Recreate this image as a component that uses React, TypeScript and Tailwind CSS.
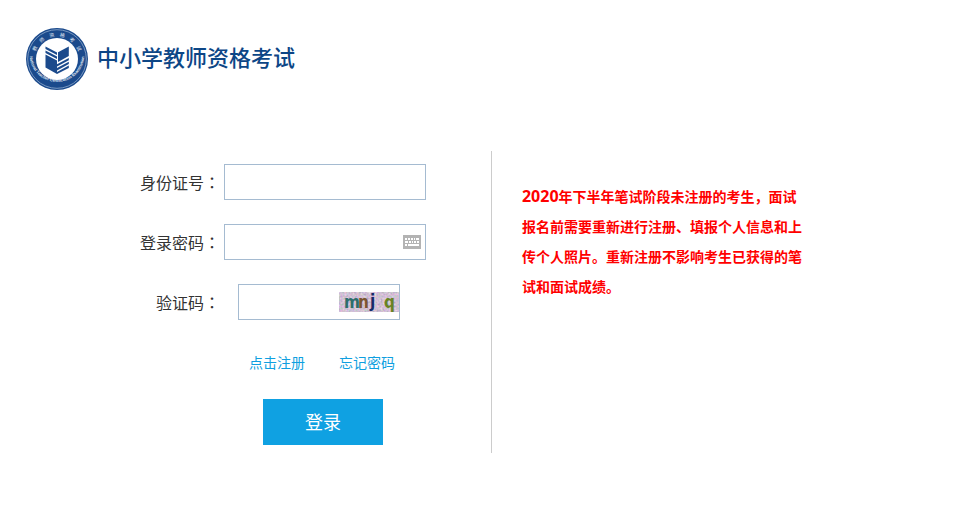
import type { ReactNode } from "react";

const NOTICE =
  "年下半年笔试阶段未注册的考生，面试报名前需要重新进行注册、填报个人信息和上传个人照片。重新注册不影响考生已获得的笔试和面试成绩。";

const inputClass = "h-9 w-full border border-[#a5bbd1] bg-white px-2 text-base text-[#333] outline-none";

function Seal() {
  return (
    <svg className="size-16 shrink-0" viewBox="0 0 64 64" aria-hidden="true">
      <defs>
        <path id="seal-top" d="M9.5 32a22.5 22.5 0 0 1 45 0" />
        <path id="seal-bottom" d="M4.8 30a27.3 27.3 0 0 0 54.4 0" />
      </defs>
      <circle cx="32" cy="32" r="31" fill="#1b4a8c" />
      <circle cx="32" cy="32" r="29.3" fill="none" stroke="#9fb7d6" strokeWidth="0.7" />
      <circle cx="32" cy="32" r="21" fill="#fff" />
      <g fill="#e4ecf6">
        <text fontFamily="'Noto Sans CJK SC', sans-serif" fontSize="5" textAnchor="middle">
          <textPath href="#seal-top" startOffset="50%">教　师　资　格　考　试</textPath>
        </text>
        <text fontFamily="'Liberation Sans', sans-serif" fontSize="4" fontWeight="bold" textAnchor="middle">
          <textPath href="#seal-bottom" startOffset="50%">National Teacher Certification Examination</textPath>
        </text>
      </g>
      {/* Open book: striped and solid faces alternate */}
      <g fill="#1b4a8c">
        <path d="M20.5 19.5L32 25.5V28L20.5 22Z" />
        <path d="M20.5 23.5L32 29.5V32L20.5 26Z" />
        <path d="M20.5 27.5L32 33.5V47L20.5 40.5Z" />
        <path d="M43.8 19.5L33 25.2V35L43.8 29Z" />
        <path d="M43.8 31L32 37.3V39.6L43.8 33.3Z" />
        <path d="M43.8 34.8L32 41.1V43.4L43.8 37.1Z" />
        <path d="M43.8 38.6L32 44.9V47L43.8 40.9Z" />
      </g>
    </svg>
  );
}

function KeyboardIcon() {
  return (
    <svg width="18" height="14" viewBox="0 0 18 14" shapeRendering="crispEdges" aria-hidden="true">
      <path d="M0 0H18V14H0Z" fill="#b3b3b3" />
      <path
        d="M2 3h2v2H2zM5 3h2v2H5zM8 3h2v2H8zM11 3h1v2h-1zM13 3h3v2h-3zM2 6h3v2H2zM6 6h2v2H6zM9 6h1v2H9zM11 6h2v2h-2zM14 6h2v2h-2zM2 9h2v2H2zM5 9h11v2H5z"
        fill="#fff"
      />
    </svg>
  );
}

function Captcha() {
  return (
    <svg width="60" height="20" viewBox="0 0 60 20" role="img" aria-label="验证码图片">
      <filter id="noise" x="0" y="0" width="100%" height="100%" colorInterpolationFilters="sRGB">
        <feTurbulence type="fractalNoise" baseFrequency="0.5" numOctaves="2" seed="4" />
        <feColorMatrix values="0.4 0 0 0 0.62  0.15 0.3 0 0 0.53  0.15 0 0.25 0 0.63  0 0 0 0 1" />
      </filter>
      <rect width="60" height="20" fill="#cfc2d3" />
      <rect width="60" height="20" filter="url(#noise)" />
      <g fontFamily="'DejaVu Sans Condensed', 'DejaVu Sans', sans-serif" fontWeight="bold" fontSize="17">
        <text x="5" y="16" fill="#2d6e6b">m</text>
        <text x="19" y="16" fill="#7b5530">n</text>
        <text x="31" y="15" fill="#152a68">j</text>
        <text x="45" y="16" fill="#688323">q</text>
      </g>
    </svg>
  );
}

function Field({ id, label, children }: { id: string; label: string; children: ReactNode }) {
  return (
    <div className="flex items-center gap-1">
      <label htmlFor={id} className="w-55 shrink-0 text-right text-base text-[#333]">
        {label}
        <span className="font-['Noto_Sans_CJK_JP',sans-serif]">：</span>
      </label>
      {children}
    </div>
  );
}

export default function App() {
  return (
    <div className="min-h-screen bg-white pb-8 font-['Open_Sans','Noto_Sans_CJK_SC',sans-serif]">
      <header className="flex items-center gap-2 px-[25px] pt-[27px]">
        <Seal />
        <h1 className="pb-1 text-[22px] leading-8 font-medium text-[#0d4686]">中小学教师资格考试</h1>
      </header>

      <main className="mt-15 flex">
        <form
          className="w-[51.3%] min-w-[440px] border-r border-[#ccc] pt-[13px] pb-2"
          onSubmit={(e) => e.preventDefault()}
        >
          <div className="flex flex-col gap-6">
            <Field id="idcard" label="身份证号">
              <div className="w-[202px]">
                <input id="idcard" type="text" className={inputClass} />
              </div>
            </Field>
            <Field id="password" label="登录密码">
              <div className="relative w-[202px]">
                <input id="password" type="password" className={inputClass} />
                <button type="button" aria-label="软键盘" className="absolute top-[11px] right-[5px]">
                  <KeyboardIcon />
                </button>
              </div>
            </Field>
            <Field id="captcha" label="验证码">
              <div className="relative ml-3.5 w-[162px]">
                <input id="captcha" type="text" className={inputClass} />
                <button type="button" aria-label="换一张" className="absolute top-2 right-px">
                  <Captcha />
                </button>
              </div>
            </Field>
          </div>

          <div className="mt-[33px] ml-[249px] flex gap-[34px] text-sm leading-5 text-[#0f9fe0]">
            <a href="#register">点击注册</a>
            <a href="#forgot">忘记密码</a>
          </div>
          <button type="submit" className="mt-[26px] ml-[263px] block h-[46px] w-30 bg-[#0fa1e2] text-lg text-white">
            登录
          </button>
        </form>

        <aside className="flex-1 px-[30px] pt-[30px]">
          <p className="max-w-[284px] text-sm leading-[30px] font-bold text-[#f00]">
            <span className="text-base leading-[30px]">2020</span>
            {NOTICE}
          </p>
        </aside>
      </main>
    </div>
  );
}
